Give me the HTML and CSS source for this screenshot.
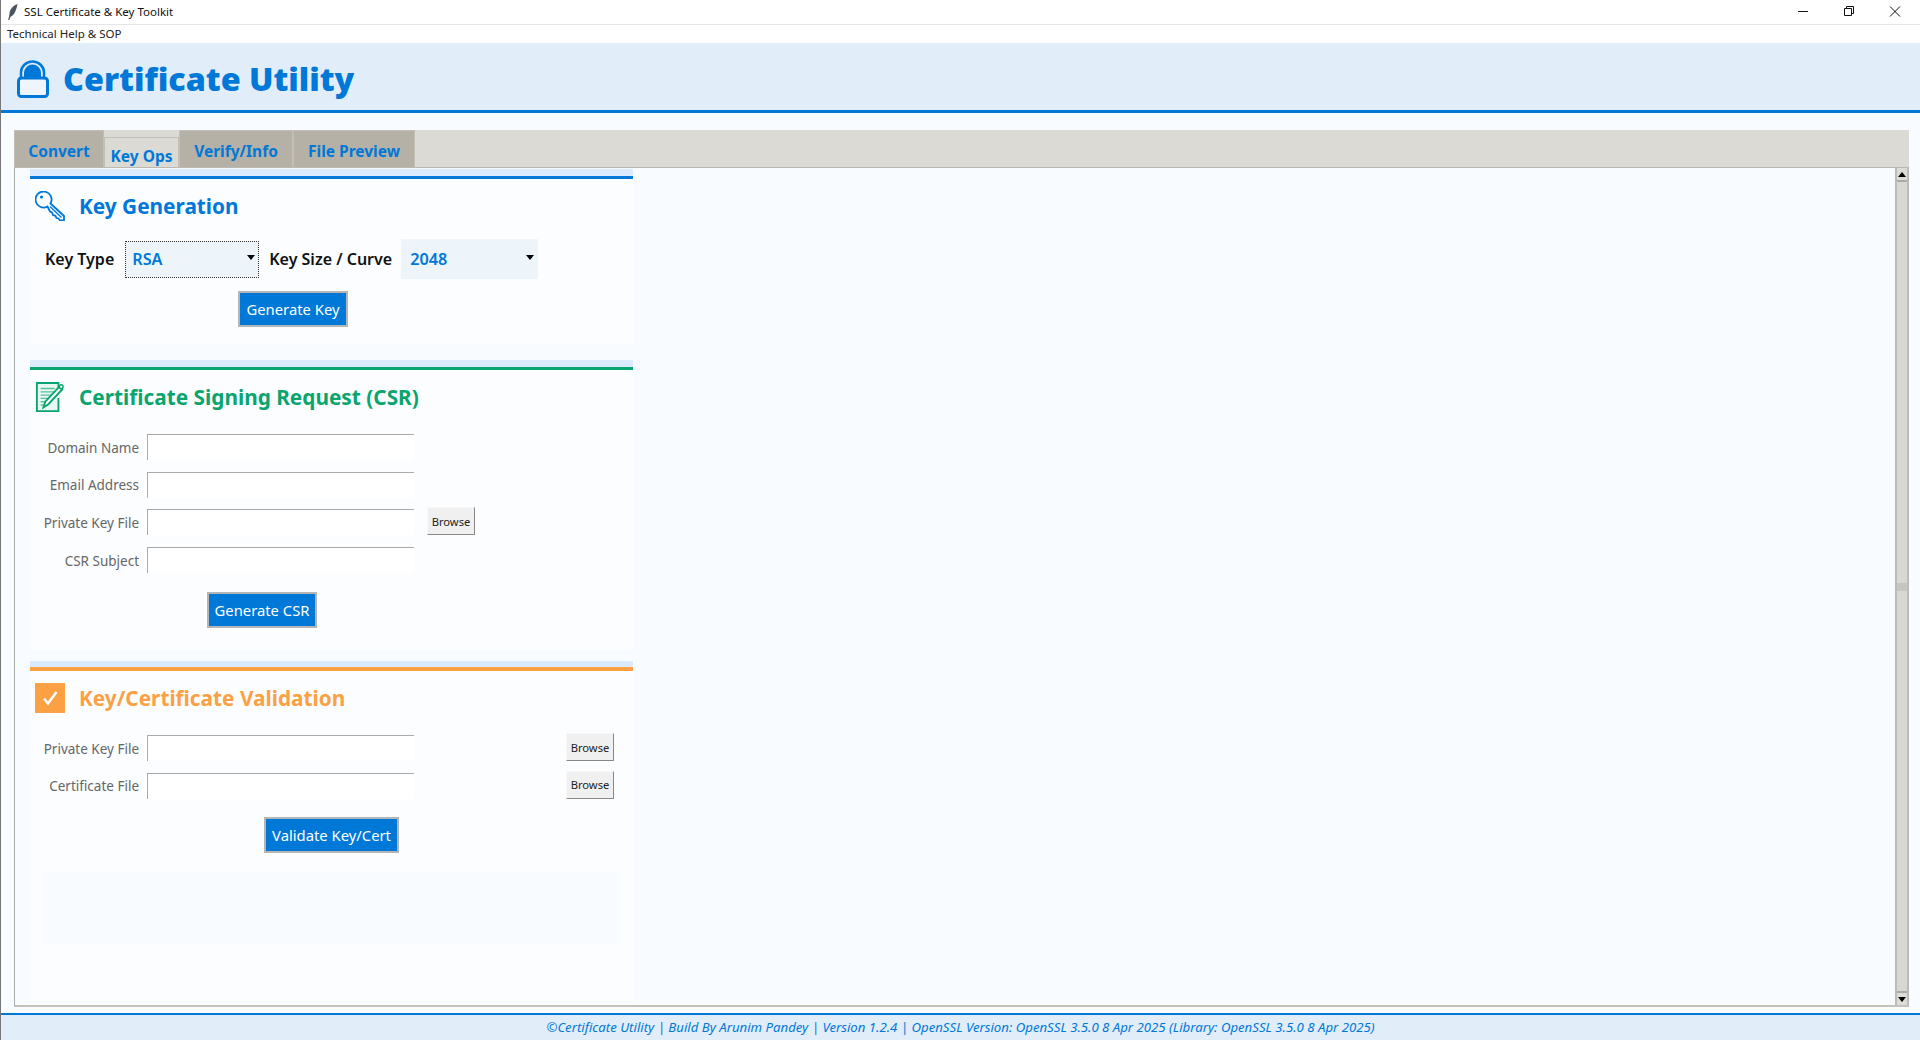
FILE: index.html
```html
<!DOCTYPE html>
<html lang="en">
<head>
<meta charset="utf-8">
<title>SSL Certificate &amp; Key Toolkit</title>
<link rel="stylesheet" href="styles.css">
</head>
<body>
<div class="app">
  <div class="titlebar">
    <svg class="feather" viewBox="0 0 12 18"><path d="M10.5 1C6 2.500 3 6 2.500 10.500C2.300 12.500 2 14.500 1 17L2.200 17C2.800 15.500 3.200 14.500 3.800 13.500C7 12.500 9.500 7 10.500 1Z"/></svg>
    <span class="app-name">SSL Certificate &amp; Key Toolkit</span>
    <div class="win-controls">
      <svg class="win-btn" viewBox="0 0 46 24"><path d="M18 11.500H28" /></svg>
      <svg class="win-btn" viewBox="0 0 46 24"><path d="M18.500 8.500H25.500V15.500H18.500ZM20.500 8.500V6.500H27.500V13.500H25.500"/></svg>
      <svg class="win-btn" viewBox="0 0 46 24"><path d="M18 6.500L28 16.500M28 6.500L18 16.500"/></svg>
    </div>
  </div>
  <div class="menubar">Technical Help &amp; SOP</div>
  <header class="header">
    <svg class="lock" viewBox="0 0 32 38"><path class="lock-arch" d="M4 19V12.500A11.500 11 0 0 1 27 12.500V19"/><path class="lock-top" d="M7 18V13A8.500 8.500 0 0 1 24 13V18Z"/><rect class="lock-body" x="1.500" y="18" width="29" height="18.500" rx="3"/></svg>
    <h1>Certificate Utility</h1>
  </header>
  <main class="main">
    <nav class="tabs">
      <div class="tab">Convert</div>
      <div class="tab active">Key Ops</div>
      <div class="tab">Verify/Info</div>
      <div class="tab">File Preview</div>
    </nav>
    <div class="pane">
      <div class="content">
        <section class="section sec-key">
          <h2 class="sec-title">
            <svg class="sec-icon" viewBox="0 0 30 30"><g fill="none" stroke="currentColor" stroke-width="1.800"><path d="M12.500 15.500A8 8 0 1 1 15.500 12.500L29 25V29.500H25L23.500 27.500L21.500 27L20.500 24.800L18 24L17 21.500L15 20.500Z"/><path d="M15 15.500L26.500 26.500" stroke-width="1.300"/></g><circle cx="6.500" cy="6" r="1.600" fill="currentColor"/></svg>
            Key Generation
          </h2>
          <div class="key-row">
            <span class="key-label">Key Type</span>
            <div class="combo focused"><span>RSA</span><i class="caret"></i></div>
            <span class="key-label">Key Size / Curve</span>
            <div class="combo wide"><span>2048</span><i class="caret"></i></div>
          </div>
          <div class="action action-key"><button class="primary">Generate Key</button></div>
        </section>

        <section class="section sec-csr">
          <h2 class="sec-title">
            <svg class="sec-icon" viewBox="0 0 30 32"><path d="M24 8V1H1V31H24V17" fill="#e9f8f2" stroke="currentColor" stroke-width="2"/><path d="M5 7H20M5 10.500H20M5 14H18M5 17.500H14M5 21H10M5 24.500H8" stroke="currentColor" stroke-width="1.500" opacity=".65"/><path d="M8 27L10 21L25 5L28 8L13 24Z" fill="#fff" stroke="currentColor" stroke-width="2"/><circle cx="27" cy="5" r="2" fill="#fff" stroke="currentColor" stroke-width="1.500"/></svg>
            Certificate Signing Request (CSR)
          </h2>
          <div class="form">
            <label class="field-label">Domain Name</label><input class="entry" type="text"><span></span>
            <label class="field-label">Email Address</label><input class="entry" type="text"><span></span>
            <label class="field-label">Private Key File</label><input class="entry" type="text"><button class="browse">Browse</button>
            <label class="field-label">CSR Subject</label><input class="entry" type="text"><span></span>
          </div>
          <div class="action action-csr"><button class="primary">Generate CSR</button></div>
        </section>

        <section class="section sec-val">
          <h2 class="sec-title">
            <svg class="sec-icon" viewBox="0 0 30 30"><rect width="30" height="30" fill="currentColor"/><path d="M9 15.500L13 20.500L21.500 9" fill="none" stroke="#fff" stroke-width="2.500"/></svg>
            Key/Certificate Validation
          </h2>
          <div class="form form-val">
            <label class="field-label">Private Key File</label><input class="entry" type="text"><button class="browse">Browse</button>
            <label class="field-label">Certificate File</label><input class="entry" type="text"><button class="browse">Browse</button>
          </div>
          <div class="action action-val"><button class="primary">Validate Key/Cert</button></div>
          <div class="result"></div>
        </section>
      </div>
      <div class="scrollbar">
        <div class="sb-btn"><i class="sb-up"></i></div>
        <div class="sb-track"><i class="sb-grip"></i></div>
        <div class="sb-btn"><i class="sb-down"></i></div>
      </div>
    </div>
  </main>
  <footer class="footer">©Certificate Utility | Build By Arunim Pandey | Version 1.2.4 | OpenSSL Version: OpenSSL 3.5.0 8 Apr 2025 (Library: OpenSSL 3.5.0 8 Apr 2025)</footer>
</div>
</body>
</html>
```
FILE: styles.css
```css
* { box-sizing: border-box; }
html, body { margin: 0; padding: 0; height: 100%; }
body { font-family: "Noto Sans", "Open Sans", sans-serif; background: #f8fbff; overflow: hidden; }
.app { display: flex; flex-direction: column; height: 1040px; border-left: 1px solid #777; }

.titlebar { height: 25px; flex: none; display: flex; align-items: center; background: #fff; border-bottom: 1px solid #e6e6e6; padding-left: 6px; }
.feather { width: 12px; height: 18px; fill: #4a5560; margin-right: 5px; }
.app-name { font-size: 11.500px; color: #111; padding-bottom: 2px; }
.win-controls { margin-left: auto; display: flex; padding-right: 2px; }
.win-btn { width: 46px; height: 24px; fill: none; stroke: #111; stroke-width: 1; }

.menubar { height: 18px; flex: none; background: #fff; font-size: 11.500px; line-height: 18px; color: #222; padding-left: 6px; }

.header { height: 70px; flex: none; display: flex; align-items: center; background: #e1edf9; border-bottom: 3px solid #0078d7; padding: 4px 0 0 16px; }
.lock { width: 32px; height: 38px; flex: none; margin-right: 14px; }
.lock-arch { fill: none; stroke: #0078d7; stroke-width: 2.500; }
.lock-top { fill: #0078d7; }
.lock-body { fill: #eef5fc; stroke: #0078d7; stroke-width: 3; }
.header h1 { margin: 0; font-size: 32.300px; font-weight: 900; color: #0078d7; line-height: 1; }

.main { flex: 1; min-height: 0; display: flex; flex-direction: column; padding: 17px 11px 6px 13px; }
.tabs { height: 38px; flex: none; display: flex; background: #dbdad5; align-items: flex-end; border-bottom: 1px solid #bdb9b0; }
.tab { height: 37px; background: #b5b1a7; border: 1px solid #c2bfb6; border-bottom: 0; color: #0078d7; font-size: 15.500px; font-weight: 700; display: flex; align-items: center; justify-content: center; padding: 3px 0 0; white-space: nowrap; }
.tab:nth-child(1) { width: 90px; }
.tab:nth-child(2) { width: 75px; height: 30px; background: #dbdad5; padding-top: 6px; }
.tab:nth-child(3) { width: 114px; }
.tab:nth-child(4) { width: 122px; }

.pane { flex: 1; min-height: 0; display: flex; background: #f8fbff; border-left: 1px solid #aaa; border-bottom: 2px solid #c4c2bb; }
.content { flex: 1; padding: 0 0 0 15px; }
.section { width: 603px; background: #fbfdff; display: flex; flex-direction: column; border-top: 10px solid; padding-top: 12px; }
.sec-key { height: 176px; margin-top: 1px; margin-bottom: 15px; color: #0078d7; border-image: linear-gradient(to bottom, #dceafd 0 7px, #0078d7 7px 10px) 10 0 0 0; }
.sec-csr { height: 290px; margin-bottom: 11px; color: #0aa56e; border-image: linear-gradient(to bottom, #dceafd 0 7px, #0aa56e 7px 10px) 10 0 0 0; }
.sec-val { height: 340px; color: #fba144; border-image: linear-gradient(to bottom, #dceafd 0 6px, #fba144 6px 10px) 10 0 0 0; }
.sec-title { margin: 0; height: 30px; display: flex; align-items: center; font-size: 20.800px; font-weight: 700; gap: 14px; padding-left: 5px; line-height: 26px; }
.sec-icon { width: 30px; height: 30px; flex: none; }

.key-row { display: flex; align-items: center; margin-top: 18px; padding-left: 15px; }
.key-label { font-size: 16px; font-weight: 600; color: #111; }
.combo { height: 37px; width: 134px; margin: 0 10px 0 11px; background: #edf5fb; border: 1px dotted #333; color: #0078d7; font-size: 16.200px; font-weight: 600; padding: 0 3px 0 6px; display: flex; align-items: center; justify-content: space-between; }
.combo.wide { width: 137px; height: 40px; border: 0; padding: 0 4px 0 9px; margin-left: 9px; }
.caret { width: 0; height: 0; border: 4px solid transparent; border-top: 5px solid #000; border-bottom: 0; margin-bottom: 3px; }

.action { display: flex; }
.action-key { padding-left: 208px; margin-top: 12px; }
.action-csr { padding-left: 177px; margin-top: 19px; }
.action-val { padding-left: 234px; margin-top: 18px; }
.primary { height: 36px; background: #0078d7; color: #fff; border: 2px solid #b5b5b5; font-family: inherit; font-size: 14.800px; padding: 0; width: 110px; }
.action-val .primary { width: 135px; }

.form { display: grid; grid-template-columns: 109px 267px 1fr; grid-auto-rows: 26px; column-gap: 8px; row-gap: 11.700px; margin-top: 22px; align-items: center; }
.form .browse { margin: -2px 0 0 5px; }
.form-val .browse { margin-left: 144px; }
.field-label { text-align: right; font-size: 13.500px; color: #666; padding-top: 1px; }
.entry { height: 26px; width: 267px; background: #fff; border: 0; border-top: 1px solid #aaa; border-left: 1px solid #aaa; padding: 0; }
.browse { width: 48px; height: 28px; background: #f0f0f0; border: 1px solid; border-color: #f8f8f8 #888 #888 #f8f8f8; font-family: inherit; font-size: 11.200px; color: #222; padding: 0; }

.result { margin: 19px 13px 0 12px; height: 72px; background: #f8fbff; }

.scrollbar { width: 14px; margin: 0 0 0 auto; flex: none; display: flex; flex-direction: column; background: #d8d7d1; border-left: 2px solid #bdbcb4; border-right: 2px solid #bdbcb4; }
.sb-btn { height: 12px; display: flex; align-items: center; justify-content: center; background: #dddcd6; }
.sb-up { width: 0; height: 0; border: 4px solid transparent; border-bottom: 5px solid #000; border-top: 0; }
.sb-down { width: 0; height: 0; border: 4px solid transparent; border-top: 5px solid #000; border-bottom: 0; }
.sb-track { flex: 1; display: flex; align-items: center; border-top: 2px solid #aaa; border-bottom: 2px solid #aaa; }
.sb-grip { width: 100%; height: 8px; background: #c6c5bf; }

.footer { height: 27px; flex: none; background: #e1edf9; border-top: 2px solid #0078d7; color: #0078d7; font-size: 13.200px; font-style: italic; text-align: center; line-height: 24px; }
```
